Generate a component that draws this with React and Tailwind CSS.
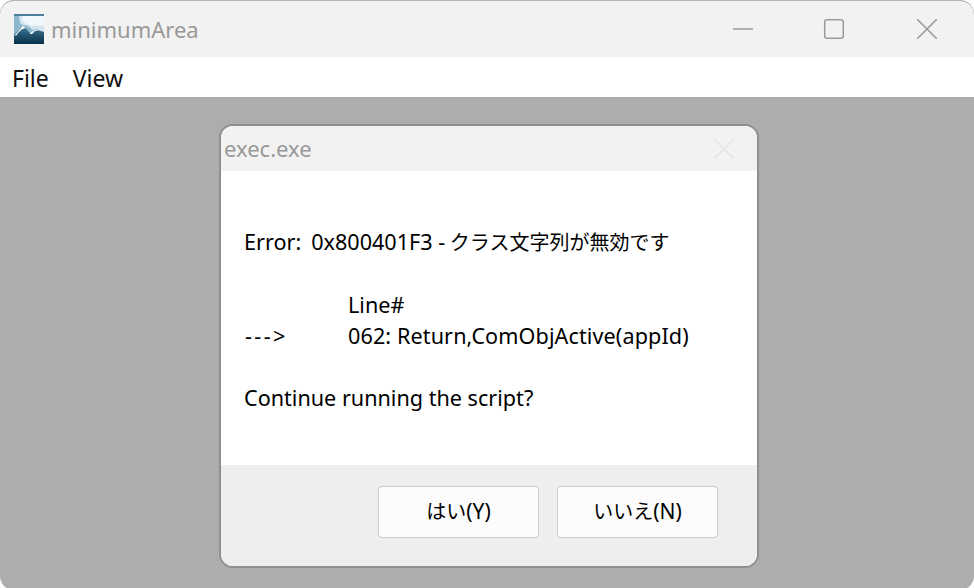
function AppIcon() {
  return (
    <svg width="30" height="30" viewBox="0 0 30 30" className="shrink-0">
      <defs>
        <linearGradient id="mt" x1="0" y1="0" x2="0" y2="1">
          <stop offset="0" stopColor="#4d7b95" />
          <stop offset="0.5" stopColor="#245671" />
          <stop offset="1" stopColor="#073049" />
        </linearGradient>
      </defs>
      <rect width="30" height="30" fill="#4e7f9a" />
      <rect x="0" y="2" width="30" height="20" fill="#8db7cd" />
      <path d="M5 2h25v16l-8-3-3 1-5-4c-3-1-6-1-8-3z" fill="#d3e5ef" />
      <path d="M8 2h22v9c-3 1-6 1-8 0-3 1-6 1-8-1-2 0-4-1-5-3-1-2-1-3-1-5z" fill="#f1f8fc" />
      <path d="M0 21L9 11.5l7 7.5 6-3 8 2v12H0z" fill="url(#mt)" />
      <path d="M1 21L9 11.5l2.5 2.5-4 1.5L4 19l-2 3zM15 18l1 1 6-3.5 2 1-3 .5-3 3-1.5 0z" fill="#f7fbfd" />
    </svg>
  );
}

function WinGlyph({ kind, color = "#999999" }) {
  return (
    <svg width="22" height="22" viewBox="0 0 22 22" fill="none" stroke={color} strokeWidth="1.5">
      {kind === "min" && <path d="M1 11h20" />}
      {kind === "max" && <rect x="1.7" y="1.7" width="18.6" height="18.6" rx="2.2" />}
      {kind === "close" && <path d="M1.2 1.2l19.6 19.6M20.8 1.2L1.2 20.8" />}
    </svg>
  );
}

function DialogButton({ children }) {
  return (
    <button className="w-[161px] h-[52px] rounded-[4px] border border-[#cccccc] bg-[#fcfcfc] text-[21px] text-black flex items-center justify-center">
      {children}
    </button>
  );
}

export default function App() {
  return (
    <div
      className="w-[974px] h-[588px] overflow-hidden bg-white"
      style={{ fontFamily: '"Noto Sans", "Noto Sans CJK JP", sans-serif' }}
    >
      <div className="w-[974px] h-[590px] flex flex-col rounded-[14px] overflow-hidden border-t border-[#b4b4b4] bg-[#adadad]">
        <header className="h-[56px] shrink-0 bg-[#f2f2f2] flex items-center pl-[14px] rounded-t-[14px]">
          <AppIcon />
          <span className="ml-[7px] text-[22px] text-[#999999]">minimumArea</span>
          <div className="ml-auto flex items-center gap-[69px] pr-[36px]">
            <WinGlyph kind="min" />
            <WinGlyph kind="max" />
            <span className="ml-[2px] flex"><WinGlyph kind="close" /></span>
          </div>
        </header>
        <nav className="h-[40px] shrink-0 bg-white flex items-center pl-[12px] gap-[24px] text-[23px] text-[#111111] pt-[3px]">
          <span>File</span>
          <span>View</span>
        </nav>
        <main className="flex-1 min-h-0 pl-[219px] pt-[27px]">
          <section className="w-[540px] h-[444px] rounded-[14px] border-2 border-[#8f8f8f] overflow-hidden flex flex-col bg-white">
            <div className="h-[45px] shrink-0 bg-[#f2f2f2] flex items-center justify-between pl-[3px] pr-[22px]">
              <span className="text-[22px] text-[#999999]">exec.exe</span>
              <WinGlyph kind="close" color="#e3e3e3" />
            </div>
            <div className="flex-1 pl-[23px] pt-[55px] text-[21.6px] leading-[31px] text-black">
              <p>
                Error:<span className="ml-[10px]">0x800401F3 - </span>
                <span className="text-[20px] -ml-[1px]">クラス文字列が無効です</span>
              </p>
              <p className="h-[31px]"></p>
              <p className="pl-[104px]">Line#</p>
              <p className="flex">
                <span className="w-[104px] pl-[1px] tracking-[2.4px]">---&gt;</span>
                <span className="tracking-[0.1px]">062: Return,ComObjActive(appId)</span>
              </p>
              <p className="h-[31px]"></p>
              <p>Continue running the script?</p>
            </div>
            <div className="h-[101px] shrink-0 bg-[#eeeeee] flex items-start justify-end gap-[18px] pt-[21px] pr-[39px]">
              <DialogButton><span className="text-[20px]">はい</span>(Y)</DialogButton>
              <DialogButton><span className="text-[20px]">いいえ</span>(N)</DialogButton>
            </div>
          </section>
        </main>
      </div>
    </div>
  );
}
